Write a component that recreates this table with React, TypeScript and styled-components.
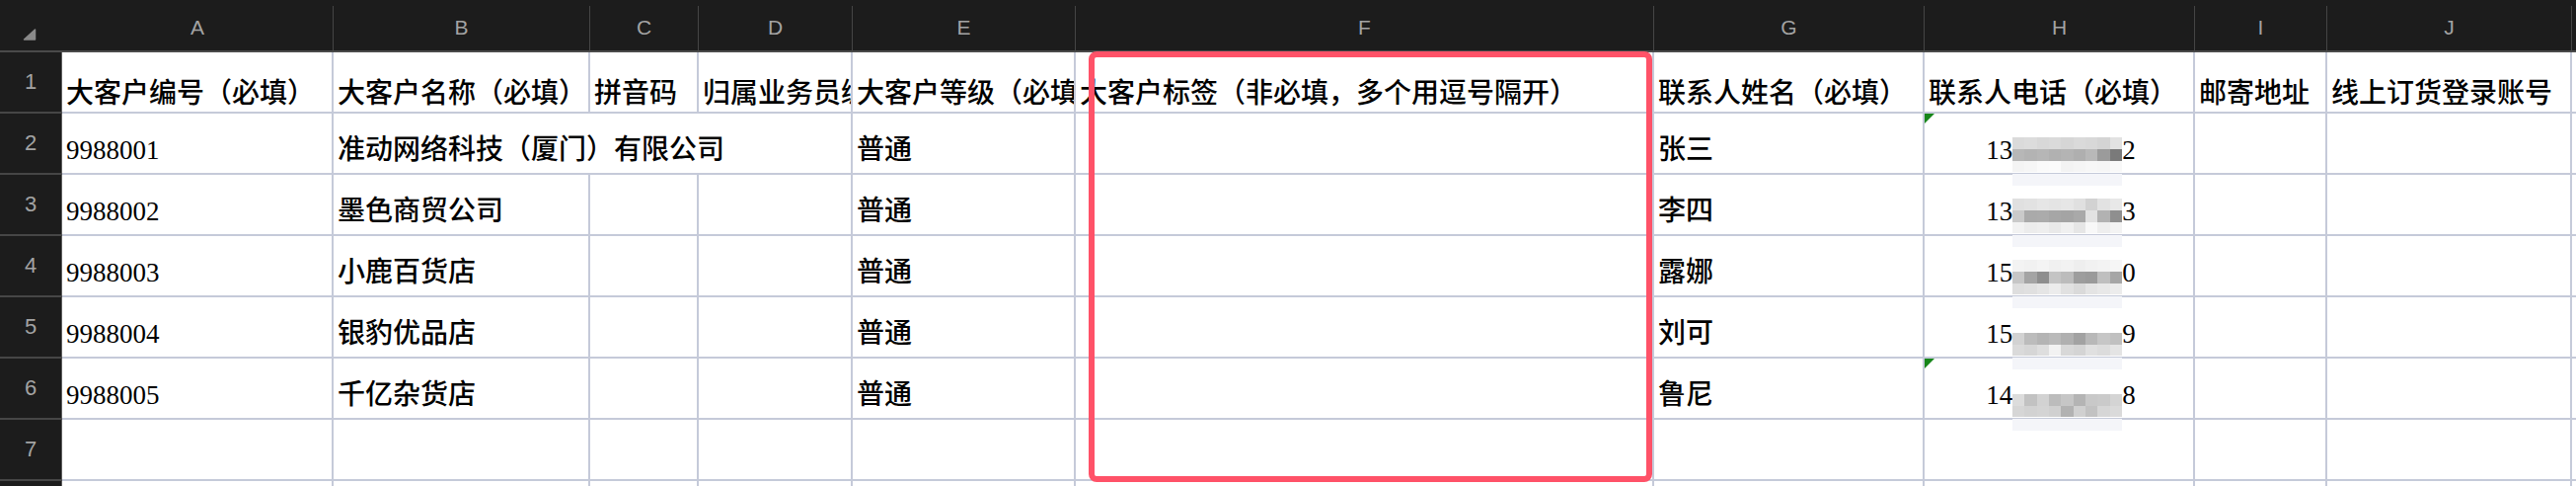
import React from "react";
import styled, { createGlobalStyle } from "styled-components";

const COLS = [63, 275, 260, 110, 156, 226, 586, 274, 274, 134, 248, 4];
const LETTERS = ["A", "B", "C", "D", "E", "F", "G", "H", "I", "J", ""];
const GRID = "#c5cad9";
const DARK = "#1c1c1c";

const Global = createGlobalStyle`
  html, body { margin: 0; padding: 0; background: #ffffff; }
  body { width: 2610px; height: 492px; overflow: hidden; }
`;

const Sheet = styled.div`
  position: relative;
  display: grid;
  grid-template-columns: ${COLS.map((w) => `${w}px`).join(" ")};
  grid-template-rows: 53px repeat(7, 62px) 20px;
  width: 2610px;
  height: 492px;
  overflow: hidden;
  background: #ffffff;
  font-family: "Liberation Serif", "Noto Sans CJK SC", serif;
`;

const Corner = styled.div`
  background: ${DARK};
  border-bottom: 2px solid #4a4a4a;
  padding: 27px 0 0 23px;
  box-sizing: border-box;
`;

const ColHeader = styled.div`
  background: ${DARK};
  border-bottom: 2px solid #4a4a4a;
  padding-top: 6px;
  display: flex;
  box-sizing: border-box;
`;

const ColLabel = styled.div<{ $last?: boolean }>`
  flex: 1;
  display: flex;
  align-items: center;
  justify-content: center;
  border-right: ${(p) => (p.$last ? "none" : "1px solid #454545")};
  font-family: "Liberation Sans", Arial, sans-serif;
  font-size: 21px;
  color: #a3a3a3;
  padding-bottom: 2px;
`;

const RowHeader = styled.div`
  background: ${DARK};
  border-bottom: 2px solid #464646;
  border-right: 1px solid #5e5e5e;
  display: flex;
  align-items: center;
  justify-content: center;
  font-family: "Liberation Sans", Arial, sans-serif;
  font-size: 22px;
  color: #a3a3a3;
  box-sizing: border-box;
`;

const Cell = styled.div<{ $span?: number; $center?: boolean; $pb?: number; $open?: boolean; $num?: boolean }>`
  position: relative;
  grid-column: span ${(p) => p.$span ?? 1};
  display: flex;
  align-items: flex-end;
  justify-content: ${(p) => (p.$center ? "center" : "flex-start")};
  padding: 0 0 ${(p) => p.$pb ?? 9}px 4px;
  border-right: 2px solid ${GRID};
  border-bottom: 2px solid ${GRID};
  box-sizing: border-box;
  overflow: ${(p) => (p.$open ? "visible" : "hidden")};
  white-space: nowrap;
  font-size: ${(p) => (p.$num ? 27 : 28)}px;
  font-weight: 500;
  line-height: 28px;
  color: #000000;
`;

const ErrorMark = styled.span`
  position: absolute;
  top: 0;
  left: 0;
  width: 0;
  height: 0;
  border-top: 10px solid #17861a;
  border-right: 10px solid transparent;
`;

const Masked = styled.span`
  position: relative;
  display: inline-block;
  width: 111px;
  color: transparent;
`;

const MosaicSvg = styled.svg`
  position: absolute;
  left: 0;
  top: 1px;
  z-index: 1;
`;

const Highlight = styled.div`
  position: absolute;
  left: 1103px;
  top: 52px;
  width: 571px;
  height: 436px;
  border: 6px solid #ff5268;
  border-radius: 8px;
  box-sizing: border-box;
  z-index: 2;
  pointer-events: none;
`;

type Mosaic = (string | null)[][];

const LIGHT = "#f4f5f9";
const MOSAICS: Mosaic[] = [
  [
    ["#dadada", "#dcdcdc", "#d8d8d8", "#dadada", "#d6d6d6", "#dadada", "#d8d8d8", "#d4d4d4", "#e2e2e2"],
    ["#b7b7b7", "#b3b3b3", "#b6b6b6", "#b1b1b1", "#b4b4b4", "#afafaf", "#b8b8b8", "#9b9b9b", "#7a7a7a"],
    ["#f4f4f4", "#f6f6f6", "#fafafa", "#fbfbfb", "#f3f3f3", "#f5f5f5", "#f7f7f7", "#f6f6f6", "#f8f8f8"],
    Array(9).fill(LIGHT),
  ],
  [
    ["#e0e0e0", "#e2e2e2", "#e6e6e6", "#e4e4e4", "#e6e6e6", "#e0e0e0", "#d2d2d2", "#e2e2e2", "#e8e8e8"],
    ["#cacaca", "#aaaaaa", "#ababab", "#a6a6a6", "#a4a4a4", "#a9a9a9", "#e2e2e2", "#b2b2b2", "#8f8f8f"],
    ["#f2f2f2", "#ececec", "#eeeeee", "#e9e9e9", "#f0f0f0", "#e6e6e6", "#f8f8f8", "#eeeeee", "#f3f3f3"],
    Array(9).fill(LIGHT),
  ],
  [
    ["#f3f3f3", "#f1f1f1", "#f4f4f4", "#f0f0f0", "#f2f2f2", "#eeeeee", "#f1f1f1", "#f3f3f3", "#f6f6f6"],
    ["#c6c6c6", "#a4a4a4", "#8e8e8e", "#c4c4c4", "#bcbcbc", "#9d9d9d", "#9a9a9a", "#bfbfbf", "#a6a6a6"],
    ["#dedede", "#e0e0e0", "#e5e5e5", "#ececec", "#e1e1e1", "#dadada", "#e4e4e4", "#e8e8e8", "#ececec"],
    Array(9).fill(LIGHT),
  ],
  [
    Array(9).fill(null),
    ["#d2d2d2", "#bcbcbc", "#b4b4b4", "#bababa", "#b0b0b0", "#a2a2a2", "#b8b8b8", "#c6c6c6", "#c0c0c0"],
    ["#dadada", "#d6d6d6", "#dedede", "#f2f2f2", "#d8d8d8", "#d4d4d4", "#e0e0e0", "#dcdcdc", "#e4e4e4"],
    Array(9).fill(LIGHT),
  ],
  [
    Array(9).fill(null),
    ["#dcdcdc", "#c2c2c2", "#d2d2d2", "#bcbcbc", "#c6c6c6", "#b4b4b4", "#c8c8c8", "#cacaca", "#d4d4d4"],
    ["#d6d6d6", "#d2d2d2", "#d4d4d4", "#d0d0d0", "#b2b2b2", "#d0d0d0", "#c2c2c2", "#d6d6d6", "#dadada"],
    Array(9).fill(LIGHT),
  ],
];

const ROW_Y = [0, 12, 24, 37];
const ROW_H = [12, 12, 11, 12];

function MosaicBlock({ data }: { data: Mosaic }) {
  const cw = 111 / 9;
  return (
    <MosaicSvg width={111} height={49} viewBox="0 0 111 49" shapeRendering="crispEdges">
      {data.map((row, r) =>
        row.map((c, i) =>
          c ? (
            <rect key={`${r}-${i}`} x={i * cw} y={ROW_Y[r]} width={cw + 0.5} height={ROW_H[r]} fill={c} />
          ) : null
        )
      )}
    </MosaicSvg>
  );
}

function Phone({ head, tail, mosaic }: { head: string; tail: string; mosaic: Mosaic }) {
  return (
    <span>
      {head}
      <Masked>
        00000000
        <MosaicBlock data={mosaic} />
      </Masked>
      {tail}
    </span>
  );
}

function CornerMark() {
  return (
    <svg width="14" height="12" viewBox="0 0 14 12">
      <path d="M12.5 1 L12.5 11 L1.5 11 Z" fill="#8a8a8a" stroke="#8a8a8a" strokeWidth="1.5" strokeLinejoin="round" />
    </svg>
  );
}

const HEAD = [
  "大客户编号（必填）",
  "大客户名称（必填）",
  "拼音码",
  "归属业务员编号",
  "大客户等级（必填）",
  "大客户标签（非必填，多个用逗号隔开）",
  "联系人姓名（必填）",
  "联系人电话（必填）",
  "邮寄地址",
  "线上订货登录账号",
  "",
];

const CUSTOMERS = [
  { id: "9988001", name: "准动网络科技（厦门）有限公司", contact: "张三", head: "13", tail: "2", mark: true },
  { id: "9988002", name: "墨色商贸公司", contact: "李四", head: "13", tail: "3", mark: false },
  { id: "9988003", name: "小鹿百货店", contact: "露娜", head: "15", tail: "0", mark: false },
  { id: "9988004", name: "银豹优品店", contact: "刘可", head: "15", tail: "9", mark: false },
  { id: "9988005", name: "千亿杂货店", contact: "鲁尼", head: "14", tail: "8", mark: true },
];

export default function App() {
  return (
    <>
      <Global />
      <Sheet>
        <Corner>
          <CornerMark />
        </Corner>
        {LETTERS.map((l, i) => (
          <ColHeader key={`h${i}`}>
            <ColLabel $last={i === LETTERS.length - 1}>{l}</ColLabel>
          </ColHeader>
        ))}

        <RowHeader>1</RowHeader>
        {HEAD.map((t, i) => (
          <Cell key={`r1-${i}`} $pb={4}>
            {t}
          </Cell>
        ))}

        {CUSTOMERS.map((c, idx) => (
          <React.Fragment key={c.id}>
            <RowHeader>{idx + 2}</RowHeader>
            <Cell $num>{c.id}</Cell>
            {idx === 0 ? (
              <Cell $span={3}>{c.name}</Cell>
            ) : (
              <>
                <Cell>{c.name}</Cell>
                <Cell />
                <Cell />
              </>
            )}
            <Cell>普通</Cell>
            <Cell />
            <Cell>{c.contact}</Cell>
            <Cell $center $open $num>
              {c.mark && <ErrorMark />}
              <Phone head={c.head} tail={c.tail} mosaic={MOSAICS[idx]} />
            </Cell>
            <Cell />
            <Cell />
            <Cell />
          </React.Fragment>
        ))}

        {[7, 8].map((n) => (
          <React.Fragment key={`e${n}`}>
            <RowHeader>{n === 7 ? "7" : ""}</RowHeader>
            {LETTERS.map((_, i) => (
              <Cell key={`e${n}-${i}`} />
            ))}
          </React.Fragment>
        ))}

        <Highlight />
      </Sheet>
    </>
  );
}
